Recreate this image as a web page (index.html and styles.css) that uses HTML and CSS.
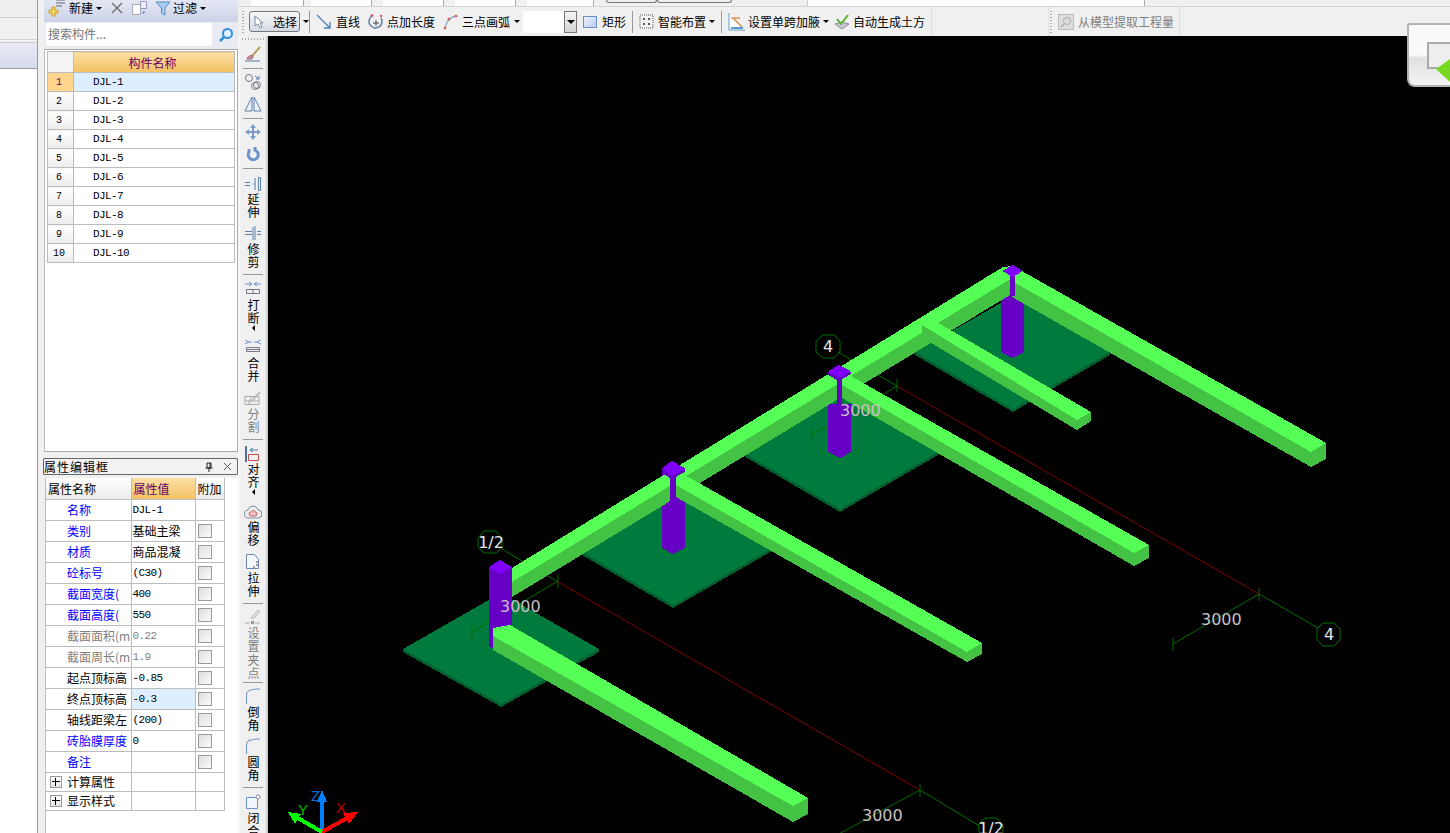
FILE: index.html
```html
<!DOCTYPE html>
<html lang="en">
<head>
    <meta charset="UTF-8">
    <title>构件</title>
    <link rel="stylesheet" href="styles.css">
</head>
<body>
    <div class="side-panel">
        <div class="side-row"></div>
        <div class="side-row"></div>
        <div class="side-tab"></div>
        <div class="side-body"></div>
    </div>

    <div class="mid-panel">
        <div class="mid-toolbar">
            <svg class="ico" width="20" height="18" viewBox="0 0 20 18"><path d="M9 1h9M9 4h9M9 7h6" stroke="#667" fill="none"/><path d="M2 11h3V8h3v3h3v3H8v3H5v-3H2z" fill="#f5d35a" stroke="#c9a030"/></svg>
            <span class="tb-label">新建</span><span class="caret"></span>
            <svg class="ico x-ico" width="14" height="14" viewBox="0 0 14 14"><path d="M2 2l10 10M12 2L2 12" stroke="#777" stroke-width="1.6"/></svg>
            <svg class="ico copy-ico" width="18" height="16" viewBox="0 0 18 16"><path d="M1.500 4.500h8v10h-8z" fill="#fff" stroke="#aaa"/><path d="M9.500 1.500h6v7h-6z" fill="#eef" stroke="#99b"/><path d="M13 11v2h-2" fill="none" stroke="#47c"/></svg>
            <svg class="ico funnel-ico" width="16" height="16" viewBox="0 0 16 16"><path d="M1 2h14L10 8v7L6.500 13V8z" fill="#a9cdf0" stroke="#5a8cc0"/></svg>
            <span class="tb-label">过滤</span><span class="caret"></span>
        </div>
        <div class="search-row">
            <div class="search-box">搜索构件...</div>
            <svg class="search-ico" width="16" height="16" viewBox="0 0 16 16"><circle cx="9.500" cy="6.500" r="4.500" fill="#dff0ff" stroke="#2e8fe0" stroke-width="2"/><path d="M6 10l-4 4" stroke="#2e8fe0" stroke-width="2.500"/></svg>
        </div>
        <div class="grid-wrap">
            <table class="grid">
                <tr><th class="num-head"></th><th class="name-head">构件名称</th></tr>
                <tr class="sel"><td class="num">1</td><td class="code">DJL-1</td></tr>
                <tr><td class="num">2</td><td class="code">DJL-2</td></tr>
                <tr><td class="num">3</td><td class="code">DJL-3</td></tr>
                <tr><td class="num">4</td><td class="code">DJL-4</td></tr>
                <tr><td class="num">5</td><td class="code">DJL-5</td></tr>
                <tr><td class="num">6</td><td class="code">DJL-6</td></tr>
                <tr><td class="num">7</td><td class="code">DJL-7</td></tr>
                <tr><td class="num">8</td><td class="code">DJL-8</td></tr>
                <tr><td class="num">9</td><td class="code">DJL-9</td></tr>
                <tr><td class="num">10</td><td class="code">DJL-10</td></tr>
            </table>
        </div>

        <div class="prop-title">
            <span>属性编辑框</span>
            <svg width="10" height="10" viewBox="0 0 10 10"><path d="M3 1h4v5H3zM1.500 6h7M5 6v4M6 1v5" stroke="#222" fill="none"/></svg>
            <svg width="9" height="9" viewBox="0 0 9 9"><path d="M1 1l7 7M8 1L1 8" stroke="#555"/></svg>
        </div>
        <div class="prop-wrap">
            <table class="props">
                <tr class="prop-head"><th class="p-name">属性名称</th><th class="p-val">属性值</th><th class="p-add">附加</th></tr>
                <tr><td class="blue">名称</td><td class="code">DJL-1</td><td></td></tr>
                <tr><td class="blue">类别</td><td>基础主梁</td><td><i class="check"></i></td></tr>
                <tr><td class="blue">材质</td><td>商品混凝</td><td><i class="check"></i></td></tr>
                <tr><td class="blue">砼标号</td><td class="code">(C30)</td><td><i class="check"></i></td></tr>
                <tr><td class="blue">截面宽度(</td><td class="code">400</td><td><i class="check"></i></td></tr>
                <tr><td class="blue">截面高度(</td><td class="code">550</td><td><i class="check"></i></td></tr>
                <tr><td class="gray">截面面积(m</td><td class="code gray">0.22</td><td><i class="check"></i></td></tr>
                <tr><td class="gray">截面周长(m</td><td class="code gray">1.9</td><td><i class="check"></i></td></tr>
                <tr><td class="plain">起点顶标高</td><td class="code">-0.85</td><td><i class="check"></i></td></tr>
                <tr><td class="plain">终点顶标高</td><td class="code active">-0.3</td><td><i class="check"></i></td></tr>
                <tr><td class="plain">轴线距梁左</td><td class="code">(200)</td><td><i class="check"></i></td></tr>
                <tr><td class="blue">砖胎膜厚度</td><td class="code">0</td><td><i class="check"></i></td></tr>
                <tr><td class="blue">备注</td><td></td><td><i class="check"></i></td></tr>
                <tr class="group"><td><i class="plus"></i>计算属性</td><td></td><td></td></tr>
                <tr class="group"><td><i class="plus"></i>显示样式</td><td></td><td></td></tr>
            </table>
        </div>
    </div>

    <div class="workspace">
        <div class="top-strip">
            <span class="field f1"></span><span class="field f2"></span><span class="field f2"></span><span class="field f2"></span>
            <span class="field f4"></span><span class="tab-btn"></span><span class="tab-btn wide"></span>
            <span class="field f6"></span>
        </div>
        <div class="top-bar">
            <div class="bar-main">
                <span class="grip"></span>
                <button class="pick">
                    <svg width="12" height="14" viewBox="0 0 12 14"><path d="M2 1v10l3-2 2 4 2-1-2-4h3z" fill="#fff" stroke="#7a8aa0"/></svg>
                    选择
                </button>
                <span class="caret"></span>
                <span class="bar-sep s-pick"></span>
                <svg width="16" height="16" viewBox="0 0 16 16"><path d="M1 1l13 13M14 8v6H8" stroke="#4d7fb5" fill="none" stroke-width="1.300"/></svg>
                <span class="bar-text t-line">直线</span>
                <svg width="16" height="17" viewBox="0 0 16 17"><path d="M4 3a6.500 6.500 0 1 0 9 2" stroke="#5577a5" fill="none" stroke-width="1.400"/><path d="M8 7v6M5 10h6" stroke="#445"/><circle cx="4" cy="2.500" r="1.500" fill="#c86060"/><circle cx="13" cy="3" r="1.300" fill="#c86060"/></svg>
                <span class="bar-text t-len">点加长度</span>
                <svg width="15" height="16" viewBox="0 0 15 16"><path d="M2 14C3 8 7 3 13 2" stroke="#7a9ac0" fill="none" stroke-width="1.300"/><circle cx="2" cy="14" r="1.500" fill="#d07060"/><circle cx="6" cy="5" r="1.500" fill="#d07060"/><circle cx="13" cy="2" r="1.500" fill="#d07060"/></svg>
                <span class="bar-text t-arc">三点画弧</span><span class="caret c-arc"></span>
                <div class="combo"><span class="combo-btn"><span class="caret"></span></span></div>
                <span class="rect-ico"></span>
                <span class="bar-text t-rect">矩形</span>
                <span class="bar-sep s-rect"></span>
                <svg class="smart" width="15" height="15" viewBox="0 0 15 15"><rect x="1" y="1" width="13" height="13" fill="#f4f4f4" stroke="#555" stroke-dasharray="1 1"/><path d="M4 5h2M9 5h2M5 4v2M10 4v2M4 10h2M9 10h2M5 9v2M10 9v2" stroke="#222"/></svg>
                <span class="bar-text t-smart">智能布置</span><span class="caret c-smart"></span>
                <span class="bar-sep s-smart"></span>
                <svg width="18" height="19" viewBox="0 0 18 19"><path d="M1 1v17h16" fill="#fff" stroke="#5c9ad0"/><path d="M3 6h9M5 6l10 10" stroke="#d09a50" stroke-width="1.500"/><path d="M3 16h12" stroke="#5c9ad0" stroke-width="2"/></svg>
                <span class="bar-text t-haunch">设置单跨加腋</span><span class="caret c-haunch"></span>
                <svg class="soil" width="16" height="16" viewBox="0 0 16 16"><path d="M1 10l7 5 7-5-7-2z" fill="#c6c6d6" stroke="#889"/><path d="M3 5l4 5 7-9" fill="none" stroke="#5cb030" stroke-width="2"/></svg>
                <span class="bar-text t-soil">自动生成土方</span>
            </div>
            <div class="bar-model">
                <span class="grip"></span>
                <svg width="16" height="16" viewBox="0 0 16 16"><rect x="0.500" y="0.500" width="15" height="15" fill="#ddd" stroke="#bbb"/><circle cx="9" cy="7" r="3.500" fill="none" stroke="#aaa"/><path d="M6 10l-3 3" stroke="#aaa" stroke-width="1.500"/></svg>
                <span class="bar-text t-model">从模型提取工程量</span>
            </div>
        </div>

        <div class="work-row">
            <div class="v-tools">
                <span class="v-grip"></span>
                <div class="v-tool"><svg width="18" height="18" viewBox="0 0 18 18"><path d="M1 16h15" stroke="#5577a5"/><path d="M8 11l8-9" stroke="#b0a060" stroke-width="2"/><path d="M3 14c1-3 3-4 6-3l-1 3z" fill="#d890a0" stroke="#a06070"/></svg></div>
                <span class="v-sep"></span>
                <div class="v-tool"><svg width="18" height="18" viewBox="0 0 18 18"><circle cx="5" cy="5" r="3.500" fill="none" stroke="#778"/><circle cx="11" cy="13" r="3.500" fill="none" stroke="#778"/><circle cx="13" cy="12" r="3.500" fill="none" stroke="#778"/><path d="M11 3l4 3M15 3v3h-3" fill="none" stroke="#5577a5"/></svg></div>
                <div class="v-tool"><svg width="18" height="18" viewBox="0 0 18 18"><path d="M8 2v14H1zM10 2v14h7z" fill="#eef3fa" stroke="#5c80b0"/></svg></div>
                <span class="v-sep"></span>
                <div class="v-tool"><svg width="16" height="16" viewBox="0 0 16 16"><path d="M8 0l3 4H9v3h3V5l4 3-4 3V9H9v3h2l-3 4-3-4h2V9H4v2L0 8l4-3v2h3V4H5z" fill="#7e9cc4"/></svg></div>
                <div class="v-tool"><svg width="16" height="16" viewBox="0 0 16 16"><path d="M4 3v3a5 5 0 1 0 6-2V1" fill="none" stroke="#6d93cc" stroke-width="3"/></svg></div>
                <span class="v-sep"></span>
                <div class="v-tool m2"><svg width="18" height="16" viewBox="0 0 18 16"><path d="M1 6.500h5M1 9.500h5M8 8h1M11 8h1M11 2v12M14.500 1.500h2v13h-2z" fill="none" stroke="#5c80b0"/></svg><span class="v-text up">延伸</span></div>
                <div class="v-tool m1"><svg width="18" height="16" viewBox="0 0 18 16"><path d="M1 6.500h7M1 9.500h7M9 2v13M11 1v14M13 6.500h4M13 9.500h4" fill="none" stroke="#5c80b0"/></svg><span class="v-text">修剪</span></div>
                <span class="v-sep"></span>
                <div class="v-tool"><svg width="18" height="14" viewBox="0 0 18 14"><path d="M1 3h6M5 1l3 2-3 2M17 3h-6M13 1l-3 2 3 2" fill="none" stroke="#6d93cc"/><path d="M2.500 8.500h13v4h-13zM9 8v5" fill="none" stroke="#778"/></svg><span class="v-text down">打断</span><span class="v-arrow"></span></div>
                <div class="v-tool m3"><svg width="18" height="14" viewBox="0 0 18 14"><path d="M1 1l4 2-4 2M5 3h3M17 1l-4 2 4 2M13 3h-3" fill="none" stroke="#6d93cc"/><path d="M2.500 8.500h13v4h-13zM2 10.500h14" fill="none" stroke="#778"/></svg><span class="v-text down">合并</span></div>
                <div class="v-tool off m2"><svg width="18" height="18" viewBox="0 0 18 18"><path d="M1 7.500h14v8H1zM1 12h14M4 16l4-9" fill="none" stroke="#aaa"/><path d="M8 12l8-9" stroke="#bbb" stroke-width="2"/></svg><span class="v-text">分割</span></div>
                <span class="v-sep"></span>
                <div class="v-tool m1"><svg width="16" height="18" viewBox="0 0 16 18"><path d="M1 1v16" stroke="#4a6fa5" stroke-width="2"/><path d="M3.500 9.500h10v6h-10z" fill="none" stroke="#c05050"/><path d="M13 5H6M8 3L5 5l3 2" fill="none" stroke="#5577a5"/></svg><span class="v-text up">对齐</span><span class="v-arrow"></span></div>
                <div class="v-tool m5"><svg width="18" height="16" viewBox="0 0 18 16"><path d="M5 14a4 4 0 0 1-1-8c0-4 9-6 10 0a4 4 0 0 1 0 8z" fill="#eee" stroke="#7a8aa0"/><path d="M7 12a2 2 0 0 1 0-4c1-2 4-2 4 0a2 2 0 0 1 0 4z" fill="#f2c0c0" stroke="#c06060"/></svg><span class="v-text up">偏移</span></div>
                <div class="v-tool m2"><svg width="16" height="18" viewBox="0 0 16 18"><path d="M1.500 1.500h8l4 5v9h-12z" fill="#f4f6fb" stroke="#6d86aa"/><path d="M11 9h2M11 12h2M8 14h2" stroke="#445"/></svg><span class="v-text">拉伸</span></div>
                <span class="v-sep"></span>
                <div class="v-tool off"><svg width="18" height="18" viewBox="0 0 18 18"><path d="M7 10l7-8 2 2-7 7z" fill="#ddd" stroke="#bbb"/><path d="M1 15h5M11 15h5" stroke="#aaa"/><rect x="7" y="13" width="3" height="3" fill="#999"/></svg><span class="v-text">设置夹点</span></div>
                <span class="v-sep tight"></span>
                <div class="v-tool"><svg width="16" height="18" viewBox="0 0 16 18"><path d="M1.500 17V8C2 4 5 2 15 2" fill="none" stroke="#6d93cc"/><path d="M1 6l5-4" stroke="#999" stroke-dasharray="1 1"/></svg><span class="v-text">倒角</span></div>
                <div class="v-tool m1"><svg width="16" height="18" viewBox="0 0 16 18"><path d="M1.500 17V8C2 4 5 2 15 2" fill="none" stroke="#6d93cc"/><path d="M1 5h2M3 3h2" stroke="#999"/></svg><span class="v-text">圆角</span></div>
                <span class="v-sep"></span>
                <div class="v-tool m1"><svg width="16" height="16" viewBox="0 0 16 16"><path d="M1.500 3.500h11v11h-11z" fill="#f4f6fb" stroke="#6d93cc"/><circle cx="13" cy="3" r="2" fill="#fff" stroke="#889"/></svg><span class="v-text">闭合</span></div>
            </div>

            <div class="canvas">
                <svg class="scene" width="1182" height="797" viewBox="268 36 1182 797">
                    <!-- axes -->
                    <g class="ax-green">
                        <polyline points="500,548 558,582"/><polyline points="920,790 978,825"/>
                        <polyline points="838,352 897,386"/><polyline points="1259,594 1318,628"/>
                        <polyline points="472,632 558,581"/><path d="M472 625v14M558 575v13M920 784v13"/>
                        <polyline points="835,836 920,790"/>
                        <polyline points="1173,644 1259,594"/><path d="M1173 638v13M1259 588v13M897 379v13"/>
                        <polyline points="860,408 897,386"/>
                        <polygon points="484,531 496,531 502,538 502,547 496,553 484,553 478,547 478,538" fill="none"/>
                        <polygon points="823,335 834,335 840,341 840,352 834,358 823,358 816,352 816,341" fill="none"/>
                        <polygon points="1323,623 1334,623 1340,629 1340,640 1334,646 1323,646 1317,640 1317,629" fill="none"/>
                        <polygon points="985,818 997,818 1003,825 1003,836 980,836 978,825" fill="none"/>
                    </g>
                    <polyline class="ax-red" points="558,582 920,790"/>
                    <polyline class="ax-red" points="897,386 1259,594"/>

                    <!-- footings -->
                    <polygon class="slab-edge" points="403,649 501,596 599,649 599,652 501,707 403,652"/>
                    <polygon class="slab" points="403,649 501,593 599,649 501,704"/>
                    <polygon class="slab-edge" points="575,548 673,495 772,548 772,551 673,608 575,551"/>
                    <polygon class="slab" points="575,548 673,492 772,548 673,605"/>
                    <polygon class="slab-edge" points="742,452 840,399 938,452 938,455 840,512 742,455"/>
                    <polygon class="slab" points="742,452 840,396 938,452 840,509"/>
                    <polygon class="slab-edge" points="915,352 1013,299 1110,352 1110,355 1013,412 915,355"/>
                    <polygon class="slab" points="915,352 1013,296 1110,352 1013,409"/>
                    <polyline class="ax-green" points="472,632 489,622"/>
                    <path class="ax-green" d="M472 625v14"/>
                    <path class="ax-green" d="M812 427v14M812 434l16-8"/>

                    <!-- columns -->
                    <polygon class="col" points="489,567 512,567 512,640 500,651 489,646"/>
                    <polygon class="col-top" points="500,560 512,567 500,574 489,567"/>
                    <polygon class="col" points="662,470 685,470 685,548 673,554 662,548"/>
                    <polygon class="col" points="828,404 851,404 851,452 840,458 828,452"/>
                    <polygon class="col" points="1001,294 1024,294 1024,352 1012,358 1001,352"/>

                    <!-- long beam and branches -->
                    <polygon class="beam-side" points="512,582 1010,278 1010,295 512,597"/>
                    <polygon class="beam-top" points="512,568 1003,267 1012,266 1012,278 512,582"/>
                    <polygon class="col" points="670,478 676,474 676,505 670,505"/>

                    <polygon class="beam-side" points="1012,281 1311,452 1326,443 1326,459 1311,467 1012,297"/>
                    <polygon class="beam-top" points="1013,266 1326,443 1311,452 1012,281"/>

                    <polygon class="beam-side" points="922,325 1077,420 1091,412 1091,421 1077,430 931,343 922,338"/>
                    <polygon class="beam-top" points="922,325 935,321 1091,412 1077,420"/>

                    <polygon class="beam-side" points="842,385 1134,553 1149,545 1149,558 1134,566 842,398"/>
                    <polygon class="beam-top" points="842,371 1149,545 1134,553 842,385"/>

                    <polygon class="beam-side" points="676,485 967,652 982,643 982,654 967,662 676,497"/>
                    <polygon class="beam-top" points="676,470 982,643 967,652 676,485"/>

                    <polygon class="beam-side" points="493,636 793,806 808,798 808,814 793,822 493,650"/>
                    <polygon class="beam-top" points="493,628 510,625 808,798 793,806 493,636"/>

                    <!-- column necks and caps over the beams -->
                    <rect class="col" x="837" y="376" width="5" height="30"/>
                    <rect class="col" x="1010" y="272" width="5" height="24"/>
                    <polygon class="col" points="662,468 685,468 685,472 672,479 662,473"/>
                    <polygon class="col-top" points="662,468 672,461 685,468 672,476"/>
                    <polygon class="col" points="828,372 851,372 851,374 839,381 828,375"/>
                    <polygon class="col-top" points="828,371 839,365 851,371 839,378"/>
                    <polygon class="col-top" points="1002,271 1013,265 1023,271 1013,277"/>

                    <!-- labels -->
                    <text class="dim" x="500" y="612">3000</text>
                    <text class="dim" x="840" y="416">3000</text>
                    <text class="dim" x="1201" y="625">3000</text>
                    <text class="dim" x="862" y="821">3000</text>
                    <text class="axis-no" x="491" y="548">1/2</text>
                    <text class="axis-no" x="828" y="352">4</text>
                    <text class="axis-no" x="1329" y="640">4</text>
                    <text class="axis-no" x="991" y="834">1/2</text>

                    <!-- view gizmo -->
                    <path d="M322 832V800" stroke="#0080ff" stroke-width="4"/>
                    <polygon points="322,790 327,802 317,802" fill="#0080ff"/>
                    <path d="M322 832L349 817" stroke="#ff0000" stroke-width="4"/>
                    <polygon points="358,812 349,824 343,813" fill="#ff0000"/>
                    <path d="M322 832L296 817" stroke="#00ff00" stroke-width="4"/>
                    <polygon points="288,812 301,814 295,824" fill="#00ff00"/>
                    <text class="giz giz-z" x="311" y="801">Z</text>
                    <text class="giz giz-y" x="298" y="815">Y</text>
                    <text class="giz giz-x" x="336" y="813">X</text>
                </svg>
            </div>
        </div>

        <div class="corner-card">
            <div class="mini-window"></div>
            <svg class="mini-arrow" width="14" height="23" viewBox="0 0 14 23"><path d="M0 10L14 0v23z" fill="#78d820"/></svg>
        </div>
    </div>
</body>
</html>
```

FILE: styles.css
```css
html, body {
    margin: 0;
    height: 100%;
}

body {
    display: flex;
    height: 833px;
    overflow: hidden;
    background-color: #f0f0f0;
    font-family: "Noto Sans CJK SC", "Liberation Sans", sans-serif;
    font-size: 12px;
    color: #000;
}

svg {
    display: block;
    flex-shrink: 0;
}

.side-panel {
    width: 37px;
    margin-right: 6px;
    display: flex;
    flex-direction: column;
    border-right: 1px solid #999;
}

.side-row {
    height: 17px;
    border-bottom: 1px solid #d0d0d0;
    background-color: #eeeeee;
}

.side-row + .side-row {
    height: 21px;
    margin-bottom: 2px;
    background-color: #f0f0f0;
}

.side-tab {
    height: 25px;
    border-top: 1px solid #c8c8c8;
    background: linear-gradient(#e8ebf5, #d6dbec);
}

.side-body {
    flex: 1;
    border-top: 1px solid #999;
    background-color: #fff;
}

.mid-panel {
    width: 194px;
    display: flex;
    flex-direction: column;
    flex-shrink: 0;
}

.mid-toolbar {
    height: 22px;
    display: flex;
    align-items: center;
    padding: 0 0 6px 3px;
    background: linear-gradient(#e4e7f3, #ccd3e9);
    box-sizing: border-box;
}

.tb-label {
    margin-left: 2px;
    line-height: 16px;
}

.x-ico {
    margin-left: 8px;
}

.copy-ico {
    margin-left: 7px;
}

.funnel-ico {
    margin-left: 6px;
}

.caret {
    display: inline-block;
    width: 0;
    height: 0;
    margin-left: 3px;
    border-left: 3px solid transparent;
    border-right: 3px solid transparent;
    border-top: 3px solid #000;
    flex-shrink: 0;
}

.search-row {
    height: 27px;
    display: flex;
    align-items: flex-start;
    padding: 1px 0 0 2px;
    background-color: #e9eaf2;
    box-sizing: border-box;
}

.search-box {
    width: 166px;
    height: 23px;
    line-height: 21px;
    padding-left: 2px;
    box-sizing: border-box;
    color: #777;
    background-color: #fff;
    border-radius: 2px;
}

.search-ico {
    margin: 4px 0 0 6px;
}

.grid-wrap {
    height: 403px;
    padding: 1px 2px 0 2px;
    border: 1px solid #aaa;
    border-left-color: #bbb;
    background-color: #fff;
    box-sizing: border-box;
}

.grid {
    width: 188px;
    table-layout: fixed;
    border-collapse: collapse;
}

.grid th, .grid td {
    border: 1px solid #bcbcbc;
    padding: 0;
    font-weight: normal;
}

.num-head {
    width: 25px;
    height: 20px;
    background: #f4f4f4;
}

.grid .name-head {
    padding-right: 3px;
    color: #660066;
    background: linear-gradient(#fbdfa6, #f2c162);
}

.grid td {
    height: 18px;
}

.grid .num {
    text-align: center;
    padding-right: 3px;
    font-family: "Liberation Mono", monospace;
    font-size: 10px;
    background: linear-gradient(#ffffff, #ececec);
}

.code {
    font-family: "Liberation Mono", monospace;
    font-size: 11px;
    letter-spacing: -0.6px;
}

.grid .code {
    padding-left: 19px;
}

.grid .sel .num {
    color: #660066;
    background: #ffd68c;
}

.sel .code {
    background-color: #ddeeff;
}

.prop-title {
    height: 15px;
    margin: 6px 0 3px -1px;
    padding: 0 5px 0 0;
    display: flex;
    align-items: center;
    border: 1px solid #666;
    border-radius: 1px;
    background-color: #f2f2f2;
    line-height: 14px;
    letter-spacing: 1px;
}

.prop-title span {
    flex: 1;
}

.prop-title svg + svg {
    margin-left: 9px;
}

.prop-wrap {
    flex: 1;
    border-left: 1px solid #bbb;
    margin-left: 1px;
    background-color: #fff;
}

.props {
    width: 179px;
    table-layout: fixed;
    border-collapse: collapse;
}

.props th, .props td {
    border: 1px solid #bcbcbc;
    border-width: 0 1px 1px 0;
    padding: 0 0 0 1px;
    height: 20px;
    font-weight: normal;
    white-space: nowrap;
    overflow: hidden;
    text-align: left;
    box-sizing: border-box;
}

.props .prop-head th {
    height: 21px;
    background: linear-gradient(#ffffff, #ececec);
    padding-left: 2px;
}

.p-name {
    width: 85px;
}

.p-val {
    width: 64px;
}

.props .prop-head .p-val {
    color: #660066;
    background: linear-gradient(#fbdfa6, #f2c162);
}

.props td:first-child {
    padding-left: 21px;
}

.blue {
    color: #0000ff;
}

.gray {
    color: #808080;
}

.active {
    background-color: #ddeeff;
}

.props td {
    height: 21px;
}

.props .group td {
    height: 19px;
}

.props .group td:first-child {
    padding-left: 4px;
}

.check {
    display: block;
    width: 12px;
    height: 12px;
    margin-left: 1px;
    border: 1px solid #9a9a9a;
    background: linear-gradient(135deg, #dedede, #fbfbfb);
}

.plus {
    position: relative;
    display: inline-block;
    width: 10px;
    height: 10px;
    margin-right: 5px;
    border: 1px solid #999;
    vertical-align: -1px;
    background: linear-gradient(#ffffff, #e4e4e4);
}

.plus::before {
    content: "";
    position: absolute;
    left: 1px;
    right: 1px;
    top: 4px;
    height: 1px;
    background-color: #000;
}

.plus::after {
    content: "";
    position: absolute;
    top: 1px;
    bottom: 1px;
    left: 4px;
    width: 1px;
    background-color: #000;
}

.workspace {
    position: relative;
    flex: 1;
    display: flex;
    flex-direction: column;
    min-width: 0;
}

.top-strip {
    height: 6px;
    display: flex;
    overflow: hidden;
    padding-left: 13px;
    border-bottom: 1px solid #d4d4d4;
    background-color: #f0f0f0;
}

.field {
    display: block;
    height: 6px;
    margin-right: 11px;
    border-right: 1px solid #aaa;
    background-color: #fff;
    flex-shrink: 0;
}

.f1 {
    width: 52px;
    margin-right: 7px;
}

.f2 {
    width: 60px;
}

.f4 {
    width: 66px;
    margin-right: 12px;
}

.f6 {
    width: 336px;
    margin: 0 0 0 75px;
    border-left: 1px solid #ccc;
}

.tab-btn {
    width: 49px;
    height: 2px;
    border: 1px solid #777;
    border-top: 0;
    border-radius: 0 0 3px 3px;
    flex-shrink: 0;
}

.tab-btn.wide {
    width: 73px;
}

.top-bar {
    height: 29px;
    display: flex;
    background-color: #f0f0f0;
}

.top-bar > div > * {
    flex-shrink: 0;
}

.bar-main {
    width: 691px;
    margin-left: 3px;
    display: flex;
    align-items: center;
    border-right: 1px solid #ddd;
    box-sizing: border-box;
    white-space: nowrap;
    flex-shrink: 0;
}

.bar-model {
    width: 132px;
    margin-left: 116px;
    display: flex;
    align-items: center;
    border-right: 1px solid #ddd;
    border-left: 1px solid #e4e4e4;
    box-sizing: border-box;
    flex-shrink: 0;
}

.bar-model .grip {
    margin-right: 6px;
}

.grip {
    width: 2px;
    height: 22px;
    margin: 0 5px 0 1px;
    background-image: linear-gradient(#aaa 50%, transparent 50%);
    background-size: 2px 3px;
}

.pick {
    width: 51px;
    height: 21px;
    padding: 0 0 0 3px;
    display: flex;
    align-items: center;
    gap: 8px;
    font: inherit;
    border: 1px solid #777;
    border-radius: 3px;
    background: linear-gradient(#f8f8f8, #d6dae6);
    box-sizing: border-box;
}

.bar-sep {
    width: 1px;
    height: 22px;
    margin: 0 8px 0 6px;
    background-color: #999;
}

.s-pick {
    margin: 0 6px 0 0;
}

.s-rect {
    margin-right: 6px;
}

.bar-text {
    line-height: 16px;
}

.t-line {
    margin: 0 8px 0 4px;
}

.t-len {
    margin: 0 8px 0 3px;
}

.t-arc {
    margin-left: 4px;
}

.c-arc {
    margin-left: 4px;
}

.combo {
    width: 54px;
    height: 22px;
    margin-left: 3px;
    display: flex;
    justify-content: flex-end;
    background-color: #fff;
}

.combo-btn {
    width: 13px;
    display: flex;
    align-items: center;
    justify-content: center;
    border: 1px solid #777;
    background: linear-gradient(#f4f4f4, #d4d4d4);
    box-sizing: border-box;
}

.combo-btn .caret {
    margin: 0;
    border-width: 4px 4px 0;
}

.rect-ico {
    width: 12px;
    height: 10px;
    margin: 0 5px 0 6px;
    border: 1px solid #6c8fc8;
    background: linear-gradient(135deg, #eef3fc, #b8cdf0);
}

.smart {
    margin-right: 4px;
}

.c-smart {
    margin-left: 3px;
}

.s-smart {
    margin: 0 6px 0 6px;
}

.t-haunch {
    margin-left: 2px;
}

.c-haunch {
    margin-left: 3px;
}

.soil {
    margin: 0 3px 0 5px;
}

.t-model {
    margin-left: 4px;
    color: #808080;
}

.work-row {
    flex: 1;
    display: flex;
    min-height: 0;
}

.v-tools {
    width: 30px;
    display: flex;
    flex-direction: column;
    align-items: center;
    gap: 2px;
    padding-top: 2px;
    overflow: hidden;
    background: linear-gradient(90deg, #fafafa, #f0f0f0 10%, #f0f0f0 90%, #c0c0c0);
    box-sizing: border-box;
    flex-shrink: 0;
}

.v-grip {
    width: 22px;
    height: 2px;
    margin-bottom: 2px;
    background-image: linear-gradient(90deg, #aaa 50%, transparent 50%);
    background-size: 3px 2px;
    flex-shrink: 0;
}

.v-tool {
    display: flex;
    flex-direction: column;
    align-items: center;
    flex-shrink: 0;
}

.v-tool svg {
    height: 20px;
}

.m1 { margin-top: 1px; }
.m2 { margin-top: 2px; }
.m3 { margin-top: 3px; }
.m5 { margin-top: 5px; }

.v-text {
    writing-mode: vertical-rl;
    text-orientation: upright;
    letter-spacing: 1.5px;
    line-height: 16px;
}

.v-text.up {
    margin-top: -1px;
}

.v-text.down {
    margin-top: 1px;
}

.off .v-text {
    color: #808080;
}

.v-arrow {
    width: 0;
    height: 0;
    margin-top: -1px;
    border-top: 3px solid transparent;
    border-bottom: 3px solid transparent;
    border-right: 3px solid #000;
}

.v-sep {
    width: 20px;
    height: 1px;
    margin: 2px 0 1px;
    background-color: #999;
    flex-shrink: 0;
}

.v-sep.tight {
    margin-top: -1px;
}

.canvas {
    flex: 1;
    min-width: 0;
    background-color: #000;
}

.scene {
    shape-rendering: crispEdges;
}

.ax-green, .ax-green polyline, .ax-green path, .ax-green polygon {
    stroke: #006f00;
    stroke-width: 1;
    fill: none;
    shape-rendering: auto;
}

.ax-red {
    stroke: #800000;
    stroke-width: 1;
    fill: none;
    shape-rendering: auto;
}

.slab {
    fill: #007a3d;
}

.slab-edge {
    fill: #00602f;
}

.col {
    fill: #6600c4;
}

.col-top {
    fill: #7f00ff;
}

.beam-top {
    fill: #55ff55;
}

.beam-side {
    fill: #44c244;
}

.dim {
    fill: #c8c0c4;
    font-family: "DejaVu Sans", sans-serif;
    font-size: 16px;
}

.axis-no {
    fill: #e8e8e8;
    font-family: "DejaVu Sans", sans-serif;
    font-size: 16px;
    text-anchor: middle;
}

.giz {
    font-family: "Liberation Sans", sans-serif;
    font-size: 15px;
}

.giz-z {
    fill: #0070e0;
}

.giz-y {
    fill: #00c000;
}

.giz-x {
    fill: #c00000;
}

.corner-card {
    position: absolute;
    top: 23px;
    right: 0;
    width: 43px;
    height: 64px;
    border: 2px solid #b4b4b4;
    border-right: 0;
    border-radius: 3px 0 0 8px;
    background: linear-gradient(#fafafa 50%, #e0e0e0 55%, #f4f4f4);
    box-sizing: border-box;
}

.mini-window {
    position: absolute;
    left: 18px;
    top: 17px;
    width: 30px;
    height: 27px;
    border: 2px solid #aaa;
    background-color: #eee;
    box-sizing: border-box;
}

.mini-arrow {
    position: absolute;
    left: 27px;
    top: 34px;
}
```
